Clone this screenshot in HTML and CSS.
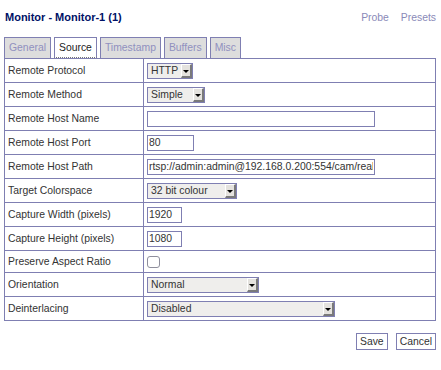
FILE: index.html
```html
<!DOCTYPE html>
<html lang="en">
<head>
    <meta charset="UTF-8">
    <title>Monitor - Monitor-1 (1)</title>
    <link rel="stylesheet" href="styles.css">
</head>
<body>
    <div class="page">
        <div class="header">
            <h2>Monitor - Monitor-1 (1)</h2>
            <div class="header-links">
                <a href="#">Probe</a>
                <a href="#">Presets</a>
            </div>
        </div>

        <!-- tabs -->
        <ul class="tabs">
            <li class="tab">General</li>
            <li class="tab active">Source</li>
            <li class="tab">Timestamp</li>
            <li class="tab">Buffers</li>
            <li class="tab">Misc</li>
        </ul>

        <form>
            <table class="content-table">
                <colgroup>
                    <col class="label-col">
                    <col>
                </colgroup>
                <tbody>
                    <tr>
                        <td>Remote Protocol</td>
                        <td>
                            <span class="select sel-protocol">
                                <select name="protocol"><option>HTTP</option><option>RTSP</option></select>
                                <span class="arrow"></span>
                            </span>
                        </td>
                    </tr>
                    <tr>
                        <td>Remote Method</td>
                        <td>
                            <span class="select sel-method">
                                <select name="method"><option>Simple</option><option>Regexp</option></select>
                                <span class="arrow"></span>
                            </span>
                        </td>
                    </tr>
                    <tr>
                        <td>Remote Host Name</td>
                        <td><input type="text" class="text-long" name="host" value=""></td>
                    </tr>
                    <tr>
                        <td>Remote Host Port</td>
                        <td><input type="text" class="text-port" name="port" value="80"></td>
                    </tr>
                    <tr>
                        <td>Remote Host Path</td>
                        <td><input type="text" class="text-long" name="path" value="rtsp://admin:admin@192.168.0.200:554/cam/realmonitor?channel=1&amp;subtype=0"></td>
                    </tr>
                    <tr>
                        <td>Target Colorspace</td>
                        <td>
                            <span class="select sel-colour">
                                <select name="colours"><option>32 bit colour</option><option>24 bit colour</option><option>8 bit grey</option></select>
                                <span class="arrow"></span>
                            </span>
                        </td>
                    </tr>
                    <tr>
                        <td>Capture Width (pixels)</td>
                        <td><input type="text" class="text-size" name="width" value="1920"></td>
                    </tr>
                    <tr>
                        <td>Capture Height (pixels)</td>
                        <td><input type="text" class="text-size" name="height" value="1080"></td>
                    </tr>
                    <tr class="check-row">
                        <td>Preserve Aspect Ratio</td>
                        <td><input type="checkbox" class="check" name="aspect"></td>
                    </tr>
                    <tr>
                        <td>Orientation</td>
                        <td>
                            <span class="select sel-orient">
                                <select name="orientation"><option>Normal</option><option>Rotate Right</option><option>Inverted</option></select>
                                <span class="arrow"></span>
                            </span>
                        </td>
                    </tr>
                    <tr>
                        <td>Deinterlacing</td>
                        <td>
                            <span class="select sel-deint">
                                <select name="deinterlacing"><option>Disabled</option><option>Four field motion adaptive</option></select>
                                <span class="arrow"></span>
                            </span>
                        </td>
                    </tr>
                </tbody>
            </table>

            <div class="actions">
                <button type="submit">Save</button>
                <button type="button">Cancel</button>
            </div>
        </form>
    </div>
</body>
</html>
```

FILE: styles.css
```css
body {
    margin: 0;
    background: #fff;
    color: #333;
    font-family: "Liberation Sans", Arial, Helvetica, sans-serif;
    font-size: 10.4px;
}
.page {
    padding: 0 5px 0 4px;
}
.header {
    display: flex;
    justify-content: space-between;
    align-items: baseline;
    height: 37px;
    padding-top: 0;
    line-height: 1;
}
.header h2 {
    margin: 12px 0 0 1px;
    font-size: 11px;
    font-weight: bold;
    color: #001166;
}
.header-links a {
    color: #8a8ab8;
    text-decoration: none;
    margin-left: 9px;
}
.tabs {
    display: flex;
    gap: 3px;
    list-style: none;
    margin: 0;
    padding: 0;
    height: 21px;
}
.tab {
    box-sizing: border-box;
    height: 21px;
    line-height: 19px;
    padding: 0 4px;
    border: 1px solid #7f7fb2;
    border-bottom: none;
    background: #dddddd;
    color: #9090bf;
}
.tab.active {
    background: #fff;
    color: #222;
    border-bottom: 1px dotted #777;
}
.content-table {
    width: 432px;
    border-collapse: collapse;
    border: 1px solid #7f7fb2;
}
.label-col {
    width: 139px;
}
.content-table td {
    border: 1px solid #7f7fb2;
    padding: 0 3px;
    height: 23px;
    vertical-align: middle;
}
.check-row td {
    height: 21px;
}
input[type="text"] {
    box-sizing: border-box;
    height: 16px;
    margin: 0;
    padding: 0 1px;
    border: 1px solid #7f7fb2;
    background: #fff;
    color: #333;
    font: inherit;
    vertical-align: middle;
}
.text-long {
    width: 228px;
}
.text-port {
    width: 47px;
}
.text-size {
    width: 35px;
}
.check {
    appearance: none;
    box-sizing: border-box;
    width: 13px;
    height: 12px;
    margin: 0;
    border: 1px solid #8f8f9d;
    border-radius: 3px;
    background: #fff;
    vertical-align: middle;
}
.select {
    display: inline-flex;
    box-sizing: border-box;
    height: 16px;
    border: 1px solid #7f7fb2;
    background: #efeeec;
    vertical-align: middle;
}
.select select {
    appearance: none;
    flex: 1;
    min-width: 0;
    margin: 0;
    padding: 0 0 0 3px;
    border: none;
    background: transparent;
    color: #333;
    font: inherit;
    outline: none;
}
.select .arrow {
    box-sizing: border-box;
    width: 11px;
    display: flex;
    align-items: center;
    justify-content: center;
    background: #e4e2de;
    border-top: 1px solid #fff;
    border-left: 1px solid #fff;
    border-right: 2px solid #7a7a7a;
    border-bottom: 2px solid #7a7a7a;
}
.select .arrow::after {
    content: "";
    margin-top: 2px;
    border-left: 3px solid transparent;
    border-right: 3px solid transparent;
    border-top: 3px solid #000;
}
.sel-protocol { width: 46px; }
.sel-method { width: 58px; }
.sel-colour { width: 90px; }
.sel-orient { width: 112px; }
.sel-deint { width: 188px; }
.actions {
    display: flex;
    justify-content: flex-end;
    gap: 8px;
    margin-top: 12px;
}
.actions button {
    box-sizing: border-box;
    height: 17px;
    padding: 0 3px;
    border: 1px solid #7f7fb2;
    background: #fff;
    color: #333;
    font: inherit;
    cursor: pointer;
}
```
